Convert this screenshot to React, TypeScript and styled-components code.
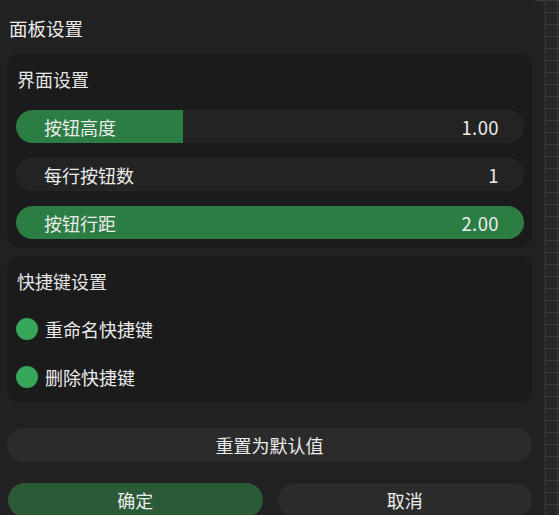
import React from "react";
import styled, { createGlobalStyle } from "styled-components";

const Global = createGlobalStyle`
  html, body {
    margin: 0;
    padding: 0;
    height: 100%;
  }
  body {
    background-color: #262626;
    background-image:
      linear-gradient(to right, #3a3a3a 1px, transparent 1px),
      linear-gradient(to bottom, #3a3a3a 1px, transparent 1px);
    background-size: 12px 12px;
    background-position: 545px 0;
    overflow: hidden;
    font-family: "Noto Sans CJK SC", "Noto Sans", sans-serif;
    color: #e6e6e6;
  }
`;

const Panel = styled.div`
  width: 544px;
  height: 515px;
  box-sizing: border-box;
  background: #212121;
  border-radius: 0 12px 0 0;
  padding: 16px 12px 0 7px;
  display: flex;
  flex-direction: column;
`;

const Title = styled.div`
  font-size: 18.5px;
  line-height: 24px;
  padding-left: 2px;
  margin-bottom: 14px;
  color: #ececec;
`;

const Card = styled.div<{ $pb: number; $mb: number }>`
  background: #1b1b1b;
  border-radius: 12px;
  padding: 13px 8px ${(p) => p.$pb}px 9px;
  margin-bottom: ${(p) => p.$mb}px;
  display: flex;
  flex-direction: column;
`;

const CardTitle = styled.div<{ $mb: number }>`
  font-size: 18px;
  line-height: 24px;
  padding-left: 1px;
  margin-bottom: ${(p) => p.$mb}px;
  color: #e6e6e6;
`;

const SliderList = styled.div`
  display: flex;
  flex-direction: column;
  gap: 15px;
`;

const Track = styled.div`
  position: relative;
  height: 33px;
  border-radius: 17px;
  background: #232323;
  box-shadow: inset 0 0 0 1px #272727;
  overflow: hidden;
`;

const Fill = styled.div`
  position: absolute;
  left: 0;
  top: 0;
  bottom: 0;
  background: #2b7d43;
`;

const TrackContent = styled.div`
  position: relative;
  height: 100%;
  display: flex;
  align-items: center;
  justify-content: space-between;
  padding: 0 25px 0 28px;
  font-size: 18px;
  color: #ececec;
`;

const Value = styled.span`
  font-size: 18.5px;
  letter-spacing: 0.4px;
`;

const ItemList = styled.div`
  display: flex;
  flex-direction: column;
  gap: 26px;
`;

const Item = styled.div`
  display: flex;
  align-items: center;
  gap: 7px;
  height: 22px;
  font-size: 18px;
  color: #ececec;
`;

const Dot = styled.span`
  width: 22px;
  height: 22px;
  border-radius: 50%;
  background: #38a65a;
  flex: none;
`;

const Button = styled.button<{ $primary?: boolean }>`
  height: 34px;
  border: none;
  border-radius: 17px;
  background: ${(p) => (p.$primary ? "#2a5a36" : "#2b2b2b")};
  color: #ececec;
  font-family: "Noto Sans CJK SC", "Noto Sans", sans-serif;
  font-size: 18px;
  padding: 0;
  flex: 1;
  display: flex;
  align-items: center;
  justify-content: center;
`;

const ResetRow = styled.div`
  display: flex;
  margin-bottom: 21px;
`;

const ActionRow = styled.div`
  display: flex;
  gap: 15px;
  padding-left: 1px;
`;

const sliders = [
  { label: "按钮高度", value: "1.00", pct: 32.9 },
  { label: "每行按钮数", value: "1", pct: 0 },
  { label: "按钮行距", value: "2.00", pct: 100 },
];

export default function App() {
  return (
    <>
      <Global />
      <Panel>
        <Title>面板设置</Title>
        <Card $pb={8} $mb={9}>
          <CardTitle $mb={19}>界面设置</CardTitle>
          <SliderList>
            {sliders.map((s) => (
              <Track key={s.label}>
                <Fill style={{ width: `${s.pct}%` }} />
                <TrackContent>
                  <span>{s.label}</span>
                  <Value>{s.value}</Value>
                </TrackContent>
              </Track>
            ))}
          </SliderList>
        </Card>
        <Card $pb={14} $mb={26}>
          <CardTitle $mb={25}>快捷键设置</CardTitle>
          <ItemList>
            <Item>
              <Dot />
              重命名快捷键
            </Item>
            <Item>
              <Dot />
              删除快捷键
            </Item>
          </ItemList>
        </Card>
        <ResetRow>
          <Button>重置为默认值</Button>
        </ResetRow>
        <ActionRow>
          <Button $primary>确定</Button>
          <Button>取消</Button>
        </ActionRow>
      </Panel>
    </>
  );
}
